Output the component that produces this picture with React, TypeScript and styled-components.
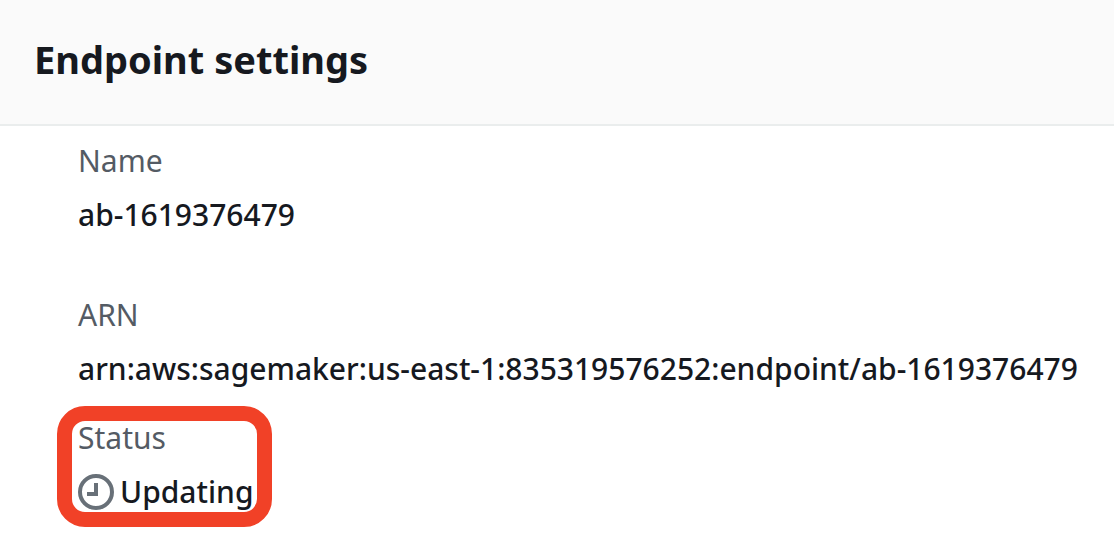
import React from 'react';
import styled, { createGlobalStyle } from 'styled-components';

const GlobalStyle = createGlobalStyle`
  *, *::before, *::after { box-sizing: border-box; }
  body {
    margin: 0;
    background: #ffffff;
    color: #16191f;
    font-family: "Noto Sans", "Open Sans", sans-serif;
  }
`;

const Header = styled.header`
  padding: 31px 34px 37px;
  background: #fafafa;
  border-bottom: 2px solid #eaeded;
`;

const Title = styled.h2`
  margin: 0;
  font-size: 38px;
  line-height: 56px;
  font-weight: 700;
`;

const Details = styled.dl`
  display: flex;
  flex-direction: column;
  align-items: flex-start;
  margin: 0;
  padding: 13px 20px 22px 78px;
`;

const Field = styled.div<{ $gap?: number }>`
  position: relative;
  margin-bottom: ${({ $gap = 0 }) => $gap}px;
`;

const Label = styled.dt`
  margin-bottom: 10px;
  color: #545b64;
  font-size: 30px;
  line-height: 44px;
`;

const Value = styled.dd`
  display: flex;
  align-items: center;
  gap: 6px;
  margin: 0;
  font-size: 30px;
  font-weight: 500;
  line-height: 44px;
  white-space: nowrap;
`;

const ClockIcon = styled.svg`
  flex: none;
  width: 36px;
  height: 36px;
`;

const Highlight = styled.div`
  position: absolute;
  inset: -10px -18px -13px -21px;
  border: 15px solid #f14127;
  border-radius: 28px;
  pointer-events: none;
`;

export default function App() {
  return (
    <>
      <GlobalStyle />
      <section aria-labelledby="endpoint-settings">
        <Header>
          <Title id="endpoint-settings">Endpoint settings</Title>
        </Header>
        <Details>
          <Field $gap={56}>
            <Label>Name</Label>
            <Value>ab-1619376479</Value>
          </Field>
          <Field $gap={25}>
            <Label>ARN</Label>
            <Value>arn:aws:sagemaker:us-east-1:835319576252:endpoint/ab-1619376479</Value>
          </Field>
          <Field>
            <Label>Status</Label>
            <Value>
              <ClockIcon viewBox="0 0 36 36" aria-hidden="true">
                <circle cx="18" cy="18" r="16" fill="none" stroke="#687078" strokeWidth="4" />
                <path d="M18 9v11H9" fill="none" stroke="#687078" strokeWidth="4" />
              </ClockIcon>
              Updating
            </Value>
            <Highlight />
          </Field>
        </Details>
      </section>
    </>
  );
}
